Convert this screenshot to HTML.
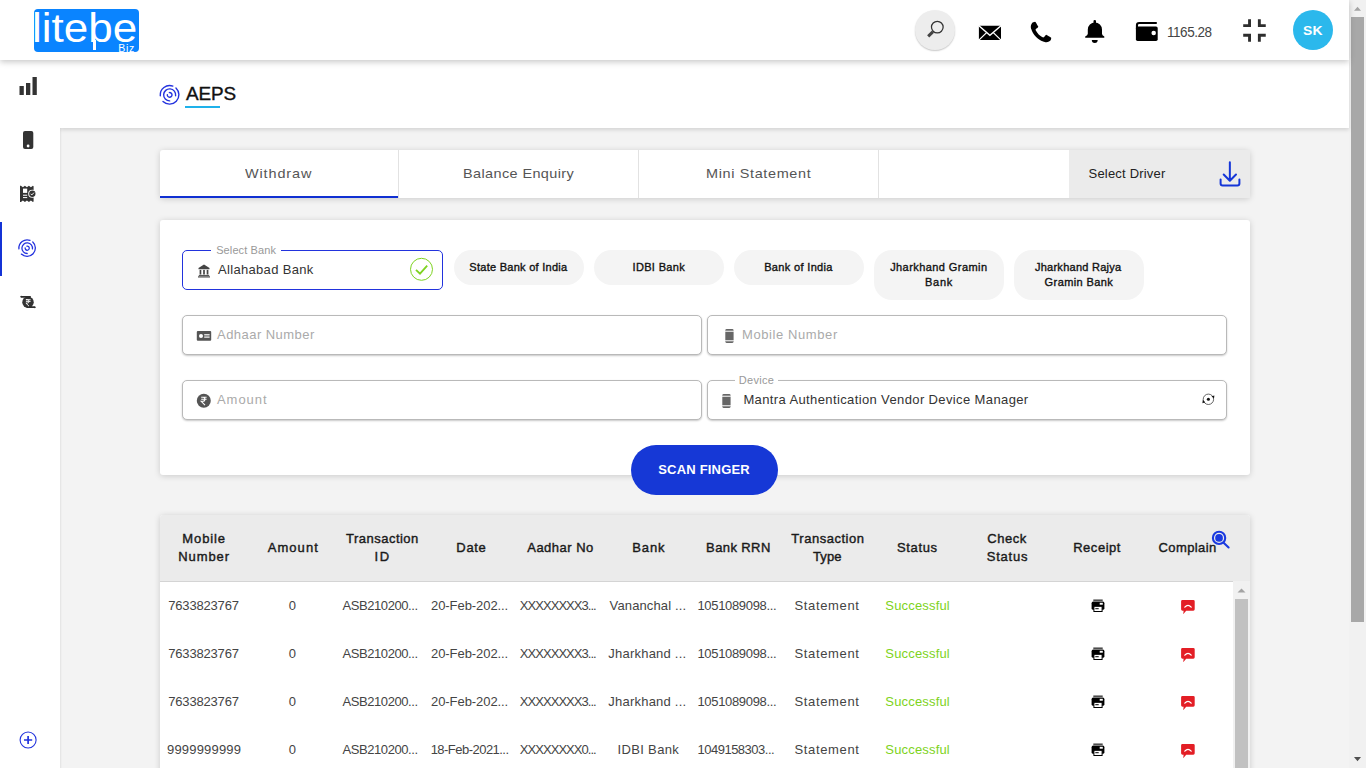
<!DOCTYPE html>
<html lang="en">
<head>
<meta charset="utf-8">
<title>AEPS</title>
<style>
*{box-sizing:border-box;margin:0;padding:0}
html,body{width:1366px;height:768px;overflow:hidden;background:#f3f3f3;font-family:"Liberation Sans",sans-serif;color:#333}
.abs{position:absolute}
#page{position:absolute;left:0;top:0;width:1366px;height:768px;overflow:hidden;background:#f3f3f3}
/* page scrollbar */
#vsb{left:1349px;top:0;width:17px;height:768px;background:#f1f1f1}
#vsb .thumb{position:absolute;left:2px;top:17px;width:13px;height:604.500px;background:#a8a8a8}
/* header */
#header{left:0;top:0;width:1349px;height:60px;background:#fff;box-shadow:0 2px 6px rgba(0,0,0,.22);z-index:5}
#sidebar{left:0;top:60px;width:60px;height:708px;background:#fff;z-index:2}
#titlebar{left:60px;top:60px;width:1289px;height:68px;background:#fff;z-index:1;box-shadow:0 2px 4px rgba(0,0,0,.13)}
.logo{left:33.500px;top:9.400px;width:105px;height:42.800px;background:#0a84ff;border-radius:4px;color:#fff;overflow:hidden}
.card{background:#fff;box-shadow:0 1px 6px rgba(0,0,0,.17);border-radius:3px}
.t{position:absolute;white-space:nowrap;line-height:1}
.inp{position:absolute;height:40px;border:1px solid #b9b9b9;border-radius:5px;background:#fff;box-shadow:0 1px 2px rgba(0,0,0,.22)}
.chip{position:absolute;width:130px;background:#f4f4f4;border-radius:18px;color:#111;font-size:11px;text-align:center;-webkit-text-stroke:.35px #111}
.tab{font-size:13.500px;color:#555;letter-spacing:.8px;transform:scaleX(1.07);transform-origin:0 0}
.ph{font-size:13px;color:#aaa}
.th{position:absolute;width:90px;text-align:center;font-size:13px;font-weight:normal;-webkit-text-stroke:.4px #1a1a1a;color:#1a1a1a;line-height:18px;white-space:nowrap}
.td{position:absolute;width:90px;text-align:center;font-size:13px;color:#444;line-height:14px;white-space:nowrap}
.td.ok{color:#7ed321}
</style>
</head>
<body>
<div id="page">

<!-- header -->
<div id="header" class="abs">
  <div class="logo abs">
    <span class="t" id="logo1" style="left:-1.500px;top:-1.600px;font-size:40px;transform:scaleX(1.1);transform-origin:0 0">litebe</span>
    <div class="abs" style="left:59.300px;top:31.100px;width:3.500px;height:9.500px;background:#fff"></div>
    <span class="t" id="logo2" style="left:84.800px;top:33.500px;font-size:10.500px;letter-spacing:.7px">Biz</span>
  </div>
  <!-- search -->
  <div class="abs" style="left:915px;top:10.300px;width:40px;height:40px;border-radius:50%;background:#ededed;box-shadow:0 1px 1.500px rgba(0,0,0,.22)"></div>
  <svg class="abs" style="left:915px;top:10px" width="40" height="40" viewBox="0 0 40 40"><circle cx="22.300" cy="17.100" r="5.850" fill="none" stroke="#333" stroke-width="1.250"/><path d="M18 21.600L13.200 26.400" stroke="#444" stroke-width="3"/></svg>
  <!-- mail -->
  <svg class="abs" style="left:978px;top:25px" width="24" height="16" viewBox="0 0 24 16"><rect x=".9" y=".8" width="22.100" height="14.200" rx=".8" fill="#000"/><path d="M.6 .4L11.900 10.300L23.300 .4" fill="none" stroke="#fff" stroke-width="1.300"/><path d="M.6 15.400L8.600 7.600M23.300 15.400L15.300 7.600" stroke="#fff" stroke-width="1.300"/></svg>
  <!-- phone -->
  <svg class="abs" style="left:1027.600px;top:20.200px" width="26" height="26" viewBox="0 0 1792 1792"><path d="M1600 1240q0 27-10 70.500t-21 68.500q-21 50-122 106-94 51-186 51-27 0-53-3.500t-57.500-12.500-47-14.500-55.500-20.500-49-18q-98-35-175-83-127-79-264-216t-216-264q-48-77-83-175-3-9-18-49t-20.500-55.500-14.500-47-12.500-57.500-3.500-53q0-92 51-186 56-101 106-122 25-11 68.500-21t70.500-10q14 0 21 3 18 6 53 76 11 19 30 54t35 63.500 31 53.500q3 4 17.500 25t21.500 35.500 7 28.500q0 20-28.500 50t-62 55-62 53-28.500 46q0 9 5 22.500t8.500 20.500 14 24 11.500 19q76 137 174 235t235 174q2 1 19 11.500t24 14 20.500 8.500 22.500 5q18 0 46-28.500t53-62 55-62 50-28.500q14 0 28.500 7t35.500 21.500 25 17.500q25 15 53.500 31t63.500 35 54 30q70 35 76 53 3 7 3 21z" fill="#000"/></svg>
  <!-- bell -->
  <svg class="abs" style="left:1083px;top:19px" width="24" height="25" viewBox="1083 19 24 25"><rect x="1093.500" y="19.900" width="2.500" height="4" rx="1.200" fill="#000"/><path d="M1087.800 29.600a7.100 7.100 0 0 1 14.200 0V33.800q0 1.600 2.300 2.700v1.200h-19.100v-1.200q2.600-1.100 2.600-2.700z" fill="#000"/><path d="M1091.800 40h5.900a2.950 2.950 0 0 1-5.900 0z" fill="#000"/></svg>
  <!-- wallet -->
  <svg class="abs" style="left:1135px;top:21px" width="24" height="21" viewBox="1135 21 24 21"><rect x="1135.900" y="26.400" width="21.800" height="14.600" rx="1.700" fill="#000"/><path d="M1136.950 29V25.200a2.250 2.250 0 0 1 2.250-2.250H1156" fill="none" stroke="#000" stroke-width="2.100" stroke-linecap="round"/><circle cx="1153.700" cy="33" r="2.250" fill="#fff"/></svg>
  <span class="t" id="bal" style="left:1166.600px;top:23.500px;font-size:15px;color:#444;letter-spacing:-.5px;transform:scaleX(.9);transform-origin:0 0">1165.28</span>
  <!-- fullscreen exit -->
  <svg class="abs" style="left:1243px;top:18px" width="24" height="25" viewBox="0 0 24 25"><path d="M.2 7.600H6.550V1.300M16.350 1.300V7.600H22.750M.2 17.300H6.550V23.800M16.350 23.800V17.300H22.750" fill="none" stroke="#2e2e2e" stroke-width="2.900"/></svg>
  <!-- avatar -->
  <div class="abs" style="left:1292.800px;top:10px;width:40px;height:40px;border-radius:50%;background:#2bb8ec"></div>
  <span class="t" id="sk" style="left:1303px;top:23.500px;font-size:13px;font-weight:bold;color:#fff;letter-spacing:.2px;transform:scaleX(1.07);transform-origin:0 0">SK</span>
</div>


<div id="sidebar" class="abs">
 <div class="abs" style="left:0;top:162px;width:2px;height:54px;background:#1433d6"></div>
 <svg class="abs" style="left:0;top:0" width="60" height="708" viewBox="0 60 60 708">
  <!-- bars -->
  <rect x="19.500" y="86" width="4.300" height="9" fill="#333"/><rect x="26" y="83" width="4.300" height="12" fill="#333"/><rect x="32.500" y="77" width="4.300" height="18" fill="#333"/>
  <!-- phone -->
  <rect x="23" y="131" width="10.300" height="18" rx="2" fill="#333"/><circle cx="28.100" cy="146" r="1.400" fill="#fff"/>
  <!-- receipt -->
  <path d="M20 185.700H20.900L22.900 187.200L24.900 185.700L26.900 187.200L28.900 185.700L30.900 187.200L32.900 185.700L33.600 186.200V201.400L32.900 201.900L30.900 200.500L28.900 201.900L26.900 200.500L24.900 201.900L22.900 200.500L20.900 201.900H20z" fill="#333"/>
  <rect x="23" y="188.600" width="4.200" height="4.300" fill="#fff"/><rect x="23" y="194.700" width="4.200" height="1.050" fill="#fff"/><rect x="23" y="197.100" width="4.200" height="1" fill="#fff"/>
  <circle cx="32.300" cy="193.750" r="4.100" fill="#fff"/><circle cx="32.300" cy="193.750" r="3.150" fill="#333"/><path d="M30.700 193.800l1.100 1.150 2.150-2.300" stroke="#fff" stroke-width=".95" fill="none"/>
  <!-- fingerprint -->
  <g transform="translate(27.2 248.2) scale(0.883)" fill="none" stroke="#2432de" stroke-width="1.45" stroke-linecap="round">
<path d="M-9.370 .8A9.400 9.400 0 0 1 3.200 -8.840"/>
<path d="M6.320 -6.970A9.400 9.400 0 1 1 -6.650 6.650"/>
<path d="M5.950 .8A6 6 0 1 0 0 6"/>
<path d="M-.3 -2.330A2.350 2.350 0 1 1 -2.330 -.3"/>
</g>
  <!-- rupee -->
  <circle cx="28" cy="302.250" r="5.750" fill="#333"/><path d="M20 296.800l1.400-1.300v.4h9.400v1.800h-9.400v.4z" fill="#2e2e2e"/><path d="M36 307.200l-1.400 1.300v-.4h-8v-1.800h8v-.4z" fill="#2e2e2e"/>
  <path d="M25.900 299.700h4.700M25.900 301.400h4.700M25.900 299.700h1.400a1.700 1.700 0 0 1 0 3.400h-1.400l3.100 3.100" fill="none" stroke="#fff" stroke-width=".9"/>
  <!-- plus -->
  <circle cx="28.100" cy="740" r="8" fill="none" stroke="#2233dd" stroke-width="1.100"/><path d="M24 740h8.200M28.100 735.900v8.200" stroke="#2233dd" stroke-width="1.700"/>
 </svg>
</div>
<div id="titlebar" class="abs">
 <svg class="abs" style="left:96px;top:22px" width="28" height="28" viewBox="156 82 28 28"><g transform="translate(169.65 94.9) scale(1.0)" fill="none" stroke="#2432de" stroke-width="1.4" stroke-linecap="round">
<path d="M-9.370 .8A9.400 9.400 0 0 1 3.200 -8.840"/>
<path d="M6.320 -6.970A9.400 9.400 0 1 1 -6.650 6.650"/>
<path d="M5.950 .8A6 6 0 1 0 0 6"/>
<path d="M-.3 -2.330A2.350 2.350 0 1 1 -2.330 -.3"/>
</g></svg>
 <span class="t" id="title" style="left:125.5px;top:25.500px;font-size:17.500px;color:#111;letter-spacing:-0.13px;-webkit-text-stroke:.35px #111;transform:scaleX(1.08);transform-origin:0 0">AEPS</span>
 <div class="abs" style="left:125px;top:46px;width:35px;height:2px;background:#1fb1ea"></div>
</div>


<div class="abs" style="left:60px;top:128px;width:2px;height:640px;background:linear-gradient(to right,rgba(0,0,0,.07),rgba(0,0,0,0))"></div>
<!-- tabs -->
<div class="abs card" id="tabs" style="left:160px;top:150px;width:1090px;height:48px">
 <div class="abs" style="left:0;top:45.800px;width:239px;height:2.200px;background:#1030d2"></div>
 <div class="abs" style="left:238px;top:0;width:1px;height:48px;background:#e2e2e2"></div>
 <div class="abs" style="left:478px;top:0;width:1px;height:48px;background:#e2e2e2"></div>
 <div class="abs" style="left:718px;top:0;width:1px;height:48px;background:#e2e2e2"></div>
 <div class="abs" style="left:909px;top:0;width:181px;height:48px;background:#ebebeb"></div>
 <span class="t tab" id="tab1" style="left:85.3px;top:17px;letter-spacing:0.83px">Withdraw</span>
 <span class="t tab" id="tab2" style="left:303.2px;top:17px;letter-spacing:0.37px">Balance Enquiry</span>
 <span class="t tab" id="tab3" style="left:545.9px;top:17px;letter-spacing:0.60px">Mini Statement</span>
 <span class="t" id="seldrv" style="left:928.6px;top:17px;font-size:13px;color:#222;letter-spacing:0.19px">Select Driver</span>
 <svg class="abs" style="left:1058px;top:11px" width="24" height="27" viewBox="0 0 24 27"><path d="M11.850 1.200V19.600M5.700 13.500L11.850 19.700L18 13.500M2.600 18.400V22.600a2 2 0 0 0 2 2H19.400a2 2 0 0 0 2-2V18.400" fill="none" stroke="#1536d8" stroke-width="2" stroke-linecap="round" stroke-linejoin="round"/></svg>
</div>

<!-- form card -->
<div class="abs card" id="form" style="left:160px;top:220px;width:1090px;height:255px"></div>
<div class="abs" id="formc" style="left:0;top:0;width:1349px;height:768px">
 <!-- select bank -->
 <div class="abs" style="left:182px;top:250px;width:261px;height:40px;border:1px solid #2233dd;border-radius:5px;background:#fff"></div>
 <div class="abs" style="left:211px;top:249px;width:70px;height:3px;background:#fff"></div>
 <span class="t" id="lblbank" style="left:216.2px;top:245px;font-size:11px;color:#999;letter-spacing:0.10px">Select Bank</span>
 <svg class="abs" style="left:197px;top:264px" width="14" height="14" viewBox="0 0 14 14"><path d="M7 .6L1.500 4v1.200h11V4z" fill="#444"/><rect x="2.600" y="5.900" width="1.700" height="4.600" fill="#444"/><rect x="6.150" y="5.900" width="1.700" height="4.600" fill="#444"/><rect x="9.700" y="5.900" width="1.700" height="4.600" fill="#444"/><rect x="1.800" y="10.900" width="10.400" height="1" fill="#444"/><rect x="1" y="12.300" width="12" height="1.200" fill="#444"/></svg>
 <span class="t" id="valbank" style="left:218.0px;top:263px;font-size:13px;color:#333;letter-spacing:0.32px">Allahabad Bank</span>
 <svg class="abs" style="left:409px;top:257px" width="25" height="25" viewBox="0 0 25 25"><circle cx="12.500" cy="12.300" r="11" fill="#fff" stroke="#7ed321" stroke-width="1"/><path d="M7 12.800l4 3.900 7.200-8" fill="none" stroke="#7ed321" stroke-width="1.800"/></svg>
 <!-- chips -->
 <div class="chip" style="left:454px;top:250px;height:35px;line-height:35px"><span id="chip1" style="position:relative;left:-0.6px;letter-spacing:0.27px">State Bank of India</span></div>
 <div class="chip" style="left:594px;top:250px;height:35px;line-height:35px"><span id="chip2" style="position:relative;left:-0.2px;letter-spacing:0.34px">IDBI Bank</span></div>
 <div class="chip" style="left:734px;top:250px;height:35px;line-height:35px"><span id="chip3" style="position:relative;left:-0.5px;letter-spacing:0.34px">Bank of India</span></div>
 <div class="chip" style="left:874px;top:250px;height:50px;line-height:15px;padding-top:10px"><span id="chip4a" style="position:relative;left:-0.2px;letter-spacing:0.43px">Jharkhand Gramin</span><br><span id="chip4b" style="position:relative;left:0.0px;letter-spacing:0.76px">Bank</span></div>
 <div class="chip" style="left:1014px;top:250px;height:50px;line-height:15px;padding-top:10px"><span id="chip5a" style="position:relative;left:-0.8px;letter-spacing:0.27px">Jharkhand Rajya</span><br><span id="chip5b" style="position:relative;left:-0.1px;letter-spacing:0.40px">Gramin Bank</span></div>
 <!-- inputs -->
 <div class="inp" style="left:182px;top:315px;width:520px"></div>
 <div class="inp" style="left:707px;top:315px;width:520px"></div>
 <div class="inp" style="left:182px;top:380px;width:520px"></div>
 <div class="inp" style="left:707px;top:380px;width:520px"></div>
 <!-- adhaar -->
 <svg class="abs" style="left:196px;top:330px" width="16" height="12" viewBox="0 0 16 12"><rect x=".8" y="1" width="14.400" height="9.800" rx="1" fill="#555"/><circle cx="5" cy="5.900" r="2" fill="#fff"/><rect x="8.200" y="4.200" width="5.400" height="1.200" fill="#fff"/><rect x="8.200" y="6.500" width="5.400" height="1.200" fill="#fff"/></svg>
 <span class="t ph" id="ph1" style="left:217.0px;top:328px;letter-spacing:0.46px">Adhaar Number</span>
 <!-- mobile -->
 <svg class="abs dev" style="left:724.8px;top:329px" width="9" height="14" viewBox="0 0 9 14"><rect x=".3" y=".1" width="8.300" height="13.800" rx="1.300" fill="#666"/><rect x="0" y="1.700" width="9" height="1.100" fill="#f0f0f0"/><rect x="0" y="11.200" width="9" height="1.100" fill="#f0f0f0"/></svg>
 <span class="t ph" id="ph2" style="left:742.0px;top:328px;letter-spacing:0.59px">Mobile Number</span>
 <!-- amount -->
 <svg class="abs" style="left:196px;top:393px" width="16" height="16" viewBox="0 0 16 16"><circle cx="7.800" cy="7.700" r="7" fill="#555"/><path d="M5.200 4.300h5.400M5.200 6.300h5.400M5.200 4.300h1.700a2 2 0 0 1 0 4h-1.700l3.800 3.900" fill="none" stroke="#fff" stroke-width="1.100"/></svg>
 <span class="t ph" id="ph3" style="left:217.0px;top:393px;letter-spacing:0.94px">Amount</span>
 <!-- device -->
 <div class="abs" style="left:735px;top:379px;width:43px;height:3px;background:#fff"></div>
 <span class="t" id="lbldev" style="left:738.8px;top:375px;font-size:11px;color:#999;letter-spacing:0.30px">Device</span>
 <svg class="abs dev" style="left:722.1px;top:394px" width="9" height="14" viewBox="0 0 9 14"><rect x=".3" y=".1" width="8.300" height="13.800" rx="1.300" fill="#666"/><rect x="0" y="1.700" width="9" height="1.100" fill="#f0f0f0"/><rect x="0" y="11.200" width="9" height="1.100" fill="#f0f0f0"/></svg>
 <span class="t" id="valdev" style="left:743.4px;top:393px;font-size:13px;color:#333;letter-spacing:0.38px">Mantra Authentication Vendor Device Manager</span>
 <svg class="abs" style="left:1201px;top:392px" width="15" height="15" viewBox="0 0 15 15"><circle cx="7.400" cy="7.300" r="5.200" fill="none" stroke="#333" stroke-width=".75"/><circle cx="7.400" cy="7.300" r="1.550" fill="#111"/><path d="M10.500 4.300l2.900-.9-.4 3.100z M4.300 10.300l-2.900 .9 .4-3.100z" fill="#111"/></svg>
 <!-- button -->
 <div class="abs" style="left:631px;top:445px;width:147px;height:50px;border-radius:25px;background:#1638d6"></div>
 <span class="t" id="btn" style="left:658.2px;top:463px;font-size:13px;font-weight:bold;color:#fff;letter-spacing:0.20px">SCAN FINGER</span>
</div>

<!-- table -->
<div class="abs card" id="tbl" style="left:160px;top:515px;width:1090px;height:260px;overflow:hidden">
 <div class="abs" style="left:0;top:0;width:1090px;height:66.500px;background:#ebebeb"></div><div class="abs" style="left:0;top:65.700px;width:1073px;height:1.200px;background:#d4d4d4"></div>
 <div class="th" style="left:-1px;top:15px"><span id="h0a" style="position:relative;left:0.1px;letter-spacing:0.86px">Mobile</span><br><span id="h0b" style="position:relative;left:0.1px;letter-spacing:0.90px">Number</span></div>
 <div class="th" style="left:88px;top:24px"><span id="h1a" style="position:relative;left:0.3px;letter-spacing:1.09px">Amount</span></div>
 <div class="th" style="left:177px;top:15px"><span id="h2a" style="position:relative;left:0.4px;letter-spacing:0.49px">Transaction</span><br><span id="h2b" style="position:relative;left:0.7px;letter-spacing:1.57px">ID</span></div>
 <div class="th" style="left:266px;top:24px"><span id="h3a" style="position:relative;left:0.4px;letter-spacing:0.66px">Date</span></div>
 <div class="th" style="left:355px;top:24px"><span id="h4a" style="position:relative;left:0.5px;letter-spacing:0.48px">Aadhar No</span></div>
 <div class="th" style="left:444px;top:24px"><span id="h5a" style="position:relative;left:-0.2px;letter-spacing:0.84px">Bank</span></div>
 <div class="th" style="left:533px;top:24px"><span id="h6a" style="position:relative;left:0.4px;letter-spacing:0.40px">Bank RRN</span></div>
 <div class="th" style="left:622px;top:15px"><span id="h7a" style="position:relative;left:0.9px;letter-spacing:0.51px">Transaction</span><br><span id="h7b" style="position:relative;left:0.3px;letter-spacing:0.15px">Type</span></div>
 <div class="th" style="left:712px;top:24px"><span id="h8a" style="position:relative;left:0.4px;letter-spacing:0.66px">Status</span></div>
 <div class="th" style="left:802px;top:15px"><span id="h9a" style="position:relative;left:0.1px;letter-spacing:0.54px">Check</span><br><span id="h9b" style="position:relative;left:0.5px;letter-spacing:0.78px">Status</span></div>
 <div class="th" style="left:892px;top:24px"><span id="h10a" style="position:relative;left:0.1px;letter-spacing:0.53px">Receipt</span></div>
 <div class="th" style="left:982px;top:24px"><span id="h11a" style="position:relative;left:0.6px;letter-spacing:0.42px">Complain</span></div>
 <svg class="abs" style="left:1050px;top:14px" width="22" height="22" viewBox="0 0 22 22"><circle cx="9.060" cy="8.900" r="6.150" fill="none" stroke="#1a3ae0" stroke-width="2.100"/><circle cx="9.060" cy="8.900" r="3.850" fill="#1a3ae0"/><path d="M13.600 13.700L18.600 18.500" stroke="#1a3ae0" stroke-width="2.100" stroke-linecap="round"/></svg>
 <div class="td" style="left:-1px;top:84px"><span id="r0c0" style="position:relative;left:-0.5px;letter-spacing:-0.18px">7633823767</span></div>
 <div class="td" style="left:88px;top:84px"><span id="r0c1" style="position:relative;left:-0.7px;letter-spacing:0.00px">0</span></div>
 <div class="td" style="left:177px;top:84px"><span id="r0c2" style="position:relative;left:-1.9px;letter-spacing:-0.42px">ASB210200...</span></div>
 <div class="td" style="left:266px;top:84px"><span id="r0c3" style="position:relative;left:-1.4px;letter-spacing:-0.07px">20-Feb-202...</span></div>
 <div class="td" style="left:355px;top:84px"><span id="r0c4" style="position:relative;left:-2.2px;letter-spacing:-0.96px">XXXXXXXX3...</span></div>
 <div class="td" style="left:444px;top:84px"><span id="r0c5" style="position:relative;left:-1.1px;letter-spacing:0.13px">Vananchal ...</span></div>
 <div class="td" style="left:533px;top:84px"><span id="r0c6" style="position:relative;left:-1.1px;letter-spacing:-0.32px">1051089098...</span></div>
 <div class="td" style="left:622px;top:84px"><span id="r0c7" style="position:relative;left:0.0px;letter-spacing:0.66px">Statement</span></div>
 <div class="td ok" style="left:712px;top:84px"><span id="r0c8" style="position:relative;left:0.6px;letter-spacing:0.17px">Successful</span></div>
 <svg class="abs" style="left:930.6px;top:84.2px" width="14" height="14" viewBox="0 0 14 14"><rect x="2.300" y=".6" width="9.400" height="1.100" fill="#000"/><rect x=".6" y="2.600" width="12.800" height="8.200" rx="1.600" fill="#000"/><rect x="8.700" y="3.800" width="3.100" height="1.900" fill="#fff"/><rect x="2.900" y="7.300" width="8.200" height="5.200" fill="#fff" stroke="#000" stroke-width="1"/><rect x="4.300" y="9.200" width="3.400" height="1" fill="#000"/></svg>
 <svg class="abs" style="left:1020px;top:84.1px" width="16" height="16" viewBox="0 0 16 16"><path d="M2.500 .9h10.800a1.400 1.400 0 0 1 1.400 1.400v8a1.400 1.400 0 0 1-1.400 1.400H6.200L3.200 15.200 3.600 11.700H2.500a1.400 1.400 0 0 1-1.400-1.400v-8A1.400 1.400 0 0 1 2.500 .9z" fill="#e31e25"/><path d="M4.800 8.200Q8 4.400 11.200 8.200" fill="none" stroke="#fff" stroke-width="1.200" stroke-linecap="round"/></svg>
 <div class="td" style="left:-1px;top:132px"><span id="r1c0" style="position:relative;left:-0.5px;letter-spacing:-0.18px">7633823767</span></div>
 <div class="td" style="left:88px;top:132px"><span id="r1c1" style="position:relative;left:-0.7px;letter-spacing:0.00px">0</span></div>
 <div class="td" style="left:177px;top:132px"><span id="r1c2" style="position:relative;left:-1.9px;letter-spacing:-0.42px">ASB210200...</span></div>
 <div class="td" style="left:266px;top:132px"><span id="r1c3" style="position:relative;left:-1.4px;letter-spacing:-0.07px">20-Feb-202...</span></div>
 <div class="td" style="left:355px;top:132px"><span id="r1c4" style="position:relative;left:-2.2px;letter-spacing:-0.96px">XXXXXXXX3...</span></div>
 <div class="td" style="left:444px;top:132px"><span id="r1c5" style="position:relative;left:-1.7px;letter-spacing:0.23px">Jharkhand ...</span></div>
 <div class="td" style="left:533px;top:132px"><span id="r1c6" style="position:relative;left:-1.1px;letter-spacing:-0.32px">1051089098...</span></div>
 <div class="td" style="left:622px;top:132px"><span id="r1c7" style="position:relative;left:0.0px;letter-spacing:0.66px">Statement</span></div>
 <div class="td ok" style="left:712px;top:132px"><span id="r1c8" style="position:relative;left:0.6px;letter-spacing:0.17px">Successful</span></div>
 <svg class="abs" style="left:930.6px;top:132.2px" width="14" height="14" viewBox="0 0 14 14"><rect x="2.300" y=".6" width="9.400" height="1.100" fill="#000"/><rect x=".6" y="2.600" width="12.800" height="8.200" rx="1.600" fill="#000"/><rect x="8.700" y="3.800" width="3.100" height="1.900" fill="#fff"/><rect x="2.900" y="7.300" width="8.200" height="5.200" fill="#fff" stroke="#000" stroke-width="1"/><rect x="4.300" y="9.200" width="3.400" height="1" fill="#000"/></svg>
 <svg class="abs" style="left:1020px;top:132.1px" width="16" height="16" viewBox="0 0 16 16"><path d="M2.500 .9h10.800a1.400 1.400 0 0 1 1.400 1.400v8a1.400 1.400 0 0 1-1.400 1.400H6.200L3.200 15.200 3.600 11.700H2.500a1.400 1.400 0 0 1-1.400-1.400v-8A1.400 1.400 0 0 1 2.500 .9z" fill="#e31e25"/><path d="M4.800 8.200Q8 4.400 11.200 8.200" fill="none" stroke="#fff" stroke-width="1.200" stroke-linecap="round"/></svg>
 <div class="td" style="left:-1px;top:180px"><span id="r2c0" style="position:relative;left:-0.5px;letter-spacing:-0.18px">7633823767</span></div>
 <div class="td" style="left:88px;top:180px"><span id="r2c1" style="position:relative;left:-0.7px;letter-spacing:0.00px">0</span></div>
 <div class="td" style="left:177px;top:180px"><span id="r2c2" style="position:relative;left:-1.9px;letter-spacing:-0.42px">ASB210200...</span></div>
 <div class="td" style="left:266px;top:180px"><span id="r2c3" style="position:relative;left:-1.4px;letter-spacing:-0.07px">20-Feb-202...</span></div>
 <div class="td" style="left:355px;top:180px"><span id="r2c4" style="position:relative;left:-2.2px;letter-spacing:-0.96px">XXXXXXXX3...</span></div>
 <div class="td" style="left:444px;top:180px"><span id="r2c5" style="position:relative;left:-1.7px;letter-spacing:0.23px">Jharkhand ...</span></div>
 <div class="td" style="left:533px;top:180px"><span id="r2c6" style="position:relative;left:-1.1px;letter-spacing:-0.32px">1051089098...</span></div>
 <div class="td" style="left:622px;top:180px"><span id="r2c7" style="position:relative;left:0.0px;letter-spacing:0.66px">Statement</span></div>
 <div class="td ok" style="left:712px;top:180px"><span id="r2c8" style="position:relative;left:0.6px;letter-spacing:0.17px">Successful</span></div>
 <svg class="abs" style="left:930.6px;top:180.2px" width="14" height="14" viewBox="0 0 14 14"><rect x="2.300" y=".6" width="9.400" height="1.100" fill="#000"/><rect x=".6" y="2.600" width="12.800" height="8.200" rx="1.600" fill="#000"/><rect x="8.700" y="3.800" width="3.100" height="1.900" fill="#fff"/><rect x="2.900" y="7.300" width="8.200" height="5.200" fill="#fff" stroke="#000" stroke-width="1"/><rect x="4.300" y="9.200" width="3.400" height="1" fill="#000"/></svg>
 <svg class="abs" style="left:1020px;top:180.1px" width="16" height="16" viewBox="0 0 16 16"><path d="M2.500 .9h10.800a1.400 1.400 0 0 1 1.400 1.400v8a1.400 1.400 0 0 1-1.400 1.400H6.200L3.200 15.200 3.600 11.700H2.500a1.400 1.400 0 0 1-1.400-1.400v-8A1.400 1.400 0 0 1 2.500 .9z" fill="#e31e25"/><path d="M4.800 8.200Q8 4.400 11.200 8.200" fill="none" stroke="#fff" stroke-width="1.200" stroke-linecap="round"/></svg>
 <div class="td" style="left:-1px;top:228px"><span id="r3c0" style="position:relative;left:0.1px;letter-spacing:0.19px">9999999999</span></div>
 <div class="td" style="left:88px;top:228px"><span id="r3c1" style="position:relative;left:-0.7px;letter-spacing:0.00px">0</span></div>
 <div class="td" style="left:177px;top:228px"><span id="r3c2" style="position:relative;left:-1.9px;letter-spacing:-0.42px">ASB210200...</span></div>
 <div class="td" style="left:266px;top:228px"><span id="r3c3" style="position:relative;left:-1.4px;letter-spacing:-0.53px">18-Feb-2021...</span></div>
 <div class="td" style="left:355px;top:228px"><span id="r3c4" style="position:relative;left:-2.2px;letter-spacing:-0.96px">XXXXXXXX0...</span></div>
 <div class="td" style="left:444px;top:228px"><span id="r3c5" style="position:relative;left:-0.7px;letter-spacing:0.35px">IDBI Bank</span></div>
 <div class="td" style="left:533px;top:228px"><span id="r3c6" style="position:relative;left:-2.2px;letter-spacing:-0.50px">1049158303...</span></div>
 <div class="td" style="left:622px;top:228px"><span id="r3c7" style="position:relative;left:0.0px;letter-spacing:0.66px">Statement</span></div>
 <div class="td ok" style="left:712px;top:228px"><span id="r3c8" style="position:relative;left:0.6px;letter-spacing:0.17px">Successful</span></div>
 <svg class="abs" style="left:930.6px;top:228.2px" width="14" height="14" viewBox="0 0 14 14"><rect x="2.300" y=".6" width="9.400" height="1.100" fill="#000"/><rect x=".6" y="2.600" width="12.800" height="8.200" rx="1.600" fill="#000"/><rect x="8.700" y="3.800" width="3.100" height="1.900" fill="#fff"/><rect x="2.900" y="7.300" width="8.200" height="5.200" fill="#fff" stroke="#000" stroke-width="1"/><rect x="4.300" y="9.200" width="3.400" height="1" fill="#000"/></svg>
 <svg class="abs" style="left:1020px;top:228.1px" width="16" height="16" viewBox="0 0 16 16"><path d="M2.500 .9h10.800a1.400 1.400 0 0 1 1.400 1.400v8a1.400 1.400 0 0 1-1.400 1.400H6.200L3.200 15.200 3.600 11.700H2.500a1.400 1.400 0 0 1-1.400-1.400v-8A1.400 1.400 0 0 1 2.500 .9z" fill="#e31e25"/><path d="M4.800 8.200Q8 4.400 11.200 8.200" fill="none" stroke="#fff" stroke-width="1.200" stroke-linecap="round"/></svg>
 <div class="abs" style="left:1073px;top:66px;width:17px;height:200px;background:#f1f1f1"></div>
 <div class="abs" style="left:1075px;top:84px;width:13px;height:200px;background:#c1c1c1"></div>
 <svg class="abs" style="left:1073px;top:66px" width="17" height="17" viewBox="0 0 17 17"><path d="M4.500 11.500L8.500 7.500L12.500 11.500z" fill="#a3a3a3"/></svg>
</div>

<div id="vsb" class="abs"><div class="thumb"></div>
<svg class="abs" style="left:0;top:0" width="17" height="768" viewBox="1349 0 17 768"><path d="M1354 10.800L1357.500 6.800L1361 10.800z" fill="#a3a3a3"/><path d="M1354 757L1357.500 761.200L1361 757z" fill="#505050"/></svg></div>
</div>
</body>
</html>
